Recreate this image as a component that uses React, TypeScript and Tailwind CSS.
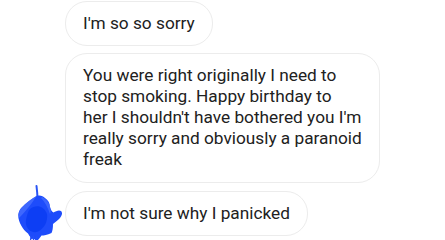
import React from "react";

const bubble =
  "inline-block bg-white border border-[#ececec] rounded-[22px] px-[17px] py-[11px] text-[17.25px] leading-[21px] text-[#212121]";

function Avatar() {
  return (
    <div className="w-[65px] h-[45px] shrink-0 relative">
      <svg
        width="65"
        height="60"
        viewBox="0 0 65 60"
        className="-mt-[7px] overflow-visible"
      >
        <path d="M36.5 2 C37 6 37.5 10 37.5 15" stroke="#2a55f5" strokeWidth="2" fill="none" strokeLinecap="round" />
        <path
          d="M36.5 12 C40 11 43 12 45 14 C48 16 50 19 50 23 C51 26 52 28 53.5 28.5 C56 27 59 25.5 61 27 C63 29 62 32 58.5 35.5 C56 38 54 39 53 40 C53 44 52.5 47 51.5 49 C47 51 44 51.5 41.5 51.5 C40 54 38 56.5 36.5 56.5 C35 56 34 55 33.5 54 C32 56 31 55.5 31 54 C29.5 52 28.5 50.5 28 49.5 C25 47 23 45 21.5 42 C19 38 18 34 18.3 30 C19 27 20 25 21.7 23.5 C26 19 31 15 36.5 12 Z"
          fill="#1e4cfb"
        />
        <path d="M21.7 23.5 C26 19 31 15 36.5 12 C33 18 27 26 19 34 C18 30 19.5 26 21.7 23.5 Z" fill="#4a70ff" opacity="0.75" />
        <path d="M42 13 C46 15 49 18 50 23 C51 26 51 28 50 30 C48 24 45 18 41 14 Z" fill="#4f76ff" opacity="0.6" />
        <path d="M30 25 C36 20 44 22 47 30 C48 38 44 45 37 48 C30 49 25 44 26 36 C27 31 28 27 30 25 Z" fill="#0a3cf2" opacity="0.85" />
        <path d="M33.5 52 L33.5 57 M36.5 53 L37 58 M31 52 L30.5 56" stroke="#2550f8" strokeWidth="1.2" strokeLinecap="round" />
      </svg>
    </div>
  );
}

export default function App() {
  return (
    <div
      className="w-[445px] h-[240px] bg-white overflow-hidden"
      style={{ fontFamily: "Roboto, 'Liberation Sans', sans-serif" }}
    >
      <div className="flex flex-col pt-[1px]">
        <div className="pl-[65px]">
          <div className={bubble}>I'm so so sorry</div>
        </div>
        <div className="pl-[65px] mt-[7px]">
          <div className={bubble + " pb-[12px]"}>
            You were right originally I need to
            <br />
            stop smoking. Happy birthday to
            <br />
            her I shouldn't have bothered you I'm
            <br />
            really sorry and obviously a paranoid
            <br />
            freak
          </div>
        </div>
        <div className="flex items-start mt-[8px]">
          <Avatar />
          <div className={bubble}>I'm not sure why I panicked</div>
        </div>
      </div>
    </div>
  );
}
